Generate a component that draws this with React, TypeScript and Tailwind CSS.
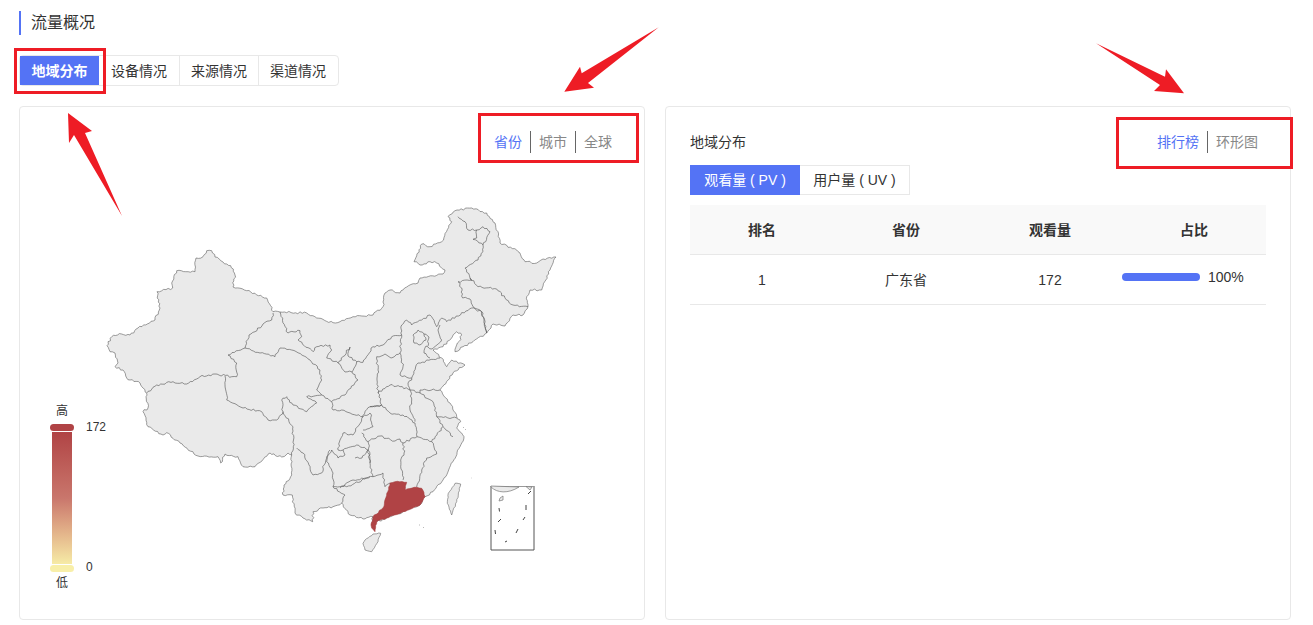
import React from "react";

type P = number[];
function jag(pts: P, closed = false, amp = 1): string {
  let seed = Math.round(pts[0] * 7 + pts[1] * 13) + 11;
  const rnd = () => {
    seed = (seed * 9301 + 49297) % 233280;
    return seed / 233280 - 0.5;
  };
  const n = pts.length / 2;
  let d = `M${pts[0]} ${pts[1]}`;
  const last = closed ? n : n - 1;
  for (let i = 0; i < last; i++) {
    const x0 = pts[i * 2], y0 = pts[i * 2 + 1];
    const j = (i + 1) % n;
    const x1 = pts[j * 2], y1 = pts[j * 2 + 1];
    const len = Math.hypot(x1 - x0, y1 - y0);
    const steps = Math.max(1, Math.round(len / 2.2));
    for (let s = 1; s < steps; s++) {
      const t = s / steps;
      const a = rnd() * 2 * amp;
      d += `L${(x0 + (x1 - x0) * t - ((y1 - y0) / len) * a).toFixed(1)} ${(y0 + (y1 - y0) * t + ((x1 - x0) / len) * a).toFixed(1)}`;
    }
    d += `L${x1} ${y1}`;
  }
  return closed ? d + "Z" : d;
}

const outline: P = [
  206.7,250.7, 211.7,250.7, 215,257, 223,262, 230.7,265.7, 235,275, 233,287, 246.7,290.7, 266.7,298, 273,311.7, 280,312, 306.7,313, 316.7,318, 333,322.7,
  340,321.7, 353,316.7, 373,315, 383,306.7, 385,293, 390,290, 400,293, 406.7,287, 418,283, 420,278, 443,274, 445,270, 436.7,263, 430,261.7, 420,265, 414,261.7, 421.7,244, 430,246.7, 441.7,241.7, 451.7,221.7, 448,216.7, 455,210.7, 471.7,208, 486.7,213, 495,223, 500,243, 516.7,250, 525,261.7, 536.7,263, 543,259, 556,257, 550,270, 541.7,290, 530,290, 526.7,296.7, 528,306.7, 523,315, 513,315, 505,326, 493,324, 486.7,333, 473,341.7, 463,346.7, 455,351.7, 461.7,335, 456.7,331.7, 443,346.7, 433,350, 441.7,358, 446.7,366.7, 451.7,360, 465,365, 453,373, 448,380,
  440,390, 450,403, 456.7,416.7, 460.7,421.7, 456.7,428, 464,436.7, 460,446.7, 453,461.7, 443,480, 433,491.7, 425,496.7, 420,505, 403,511.7, 386.7,518, 376.7,521.7, 371.7,525, 373,516.7, 363,519, 350,515, 341.7,503, 333,506.7, 323,508, 313,511.7, 312.7,521.7, 303,518, 295,513, 292.3,495, 283,495, 284,485, 291.7,475, 291.7,455, 288,453, 281.7,457, 270,453, 255,466.7, 243,466.7, 238,456.7, 225,454, 220.7,463, 218,456.7, 198,456, 180,443, 166.7,432.7, 163,435, 148,426.7, 143,411.7, 148,408, 146,396.7, 146.7,393.3, 140,383, 130,380, 126.7,378, 123,370, 115,366.7, 118,363, 115,353, 110,351.7, 107,345.7, 111.7,336.7, 121.7,334, 130,335, 138,328, 155,320, 160,308, 157,291.7, 172.7,288, 171.7,283, 176.7,270.7, 195,271.7, 196,258, 203,256.7,
];

const borders: P[] = [
  [273,313, 271.7,320, 263,324, 255,331.7, 249,335, 245,348, 228,355, 236.7,363, 236.7,376.7, 231.7,376.7, 215,374, 200,376.7, 186.7,384, 173,381.7, 156.7,385, 146.7,393],
  [225,376, 226.7,400, 243,408, 261.7,411.7, 268,420, 276.7,420, 283,411.7, 293,426.7, 293.3,446.7, 291.7,455],
  [283,411.7, 281.7,400, 286.7,396.7, 293,405, 306.7,411.7, 316.7,403, 306.7,396.7, 321.7,395, 331.7,401.7, 333,410, 341.7,410, 363,416.7, 370,413],
  [245,348, 260,353, 275,356.7, 280,348, 291.7,350, 310,360, 320,370, 321.7,380, 316.7,390, 321.7,395],
  [280,312, 285,326.7, 288,333, 300,330.7, 301.7,336.7, 298,340, 313,351.7, 316.7,346.7, 330,345, 331.7,350, 326.7,358, 338,363, 343,356.7, 350,347, 348,356, 356.7,361.7, 363,362.3, 373,346.7, 383,345, 391.7,336.7, 401.7,335, 401.7,325, 406.7,320, 411.7,325, 421.7,320, 430,315, 436.7,326.7, 441.7,318, 446.7,321.7, 471.7,308, 481.7,311.7, 486.7,333],
  [338,363, 345,372, 352,372, 356.7,361.7],
  [352,372, 358,380, 345,395, 331.7,401.7],
  [376.7,356.7, 378,370, 377,380, 378,393, 381.7,405, 370,406.7, 361.7,416.7],
  [400,353, 403,366.7, 400,375, 411.7,378, 411.7,380, 408,383, 410,390, 400,386.7, 390,385, 378,393],
  [401.7,335, 400,353, 391,358, 385,354, 376.7,356.7],
  [411.7,378, 418,363, 440,358],
  [441.7,340, 438,330, 440,325],
  [441.7,340, 432,349, 426,346, 424,353, 430,358],
  [413,335, 418,330, 424,334, 426,340, 419,345, 414,343, 413,335],
  [424,334, 429,337, 428,346],
  [473,306.7, 483,313, 486.7,333],
  [471.7,280, 458,281.7, 461.7,288, 462.7,298, 470,299, 473,306.7],
  [470,278, 478,286.7, 496.7,289, 505,298, 513,305, 528,306.7],
  [458,216.7, 465,221.7, 468,230, 476.7,230, 483,226.7, 490,231.7, 483,245, 483,251.7, 478,260, 465,268, 470,278, 471.7,280],
  [476.7,230, 476.7,238, 473,239.3, 483,245],
  [370,406.7, 381.7,405, 390,413, 403,415, 415,423, 417,436.7],
  [410,390, 411.7,400, 410,410, 415,421.7],
  [410,390, 420,393, 433,401.7, 436.7,416.7, 443,426.7],
  [420,393, 420,390, 440,390],
  [436.7,416.7, 456.7,418],
  [417,436.7, 431.7,441.7, 436.7,454, 426.7,458, 421.7,470, 416.7,487],
  [431.7,441.7, 443,426.7, 453,436.7],
  [403,443, 417,436.7],
  [403,443, 404,453, 400.7,460, 403,480],
  [368,441.7, 380,436, 395,441, 400,439, 403,443],
  [368,441.7, 370,463, 373,476.7, 383,473, 385,486.7, 390,483],
  [373,476.7, 353,480, 340,488],
  [330,450, 326.7,461.7, 333,473, 333,486.7, 346.7,486.7, 370,476.7],
  [333,486.7, 345,495, 341.7,503],
  [296.7,448, 303,453, 313,475, 321.7,473, 326.7,456.7, 331.7,450, 338,458, 345,455, 343,450, 356.7,445, 368,450, 370,463],
  [340,440, 343,433, 353,435, 363,416.7],
  [340,440, 338,450, 343,450],
  [361.7,433, 368,441.7],
  [363,430, 373,426.7, 370,413],
  [368,450, 362,458, 355,458],
];

const guangdong: P = [371,525, 373,516.7, 383,508, 390,483, 395,481.7, 406.7,482.3, 405,490, 416.7,487.3, 421.7,488.3, 425,496.7, 420,505, 403,511.7, 386.7,518, 376.7,521.7, 375,531.7, 371.7,528];
const hainan: P = [365,540, 373,534, 380.7,533.3, 378,541.7, 371.7,551.7, 365,550, 363,543.3];
const taiwan: P = [455,483.3, 460.7,484, 456.7,501.7, 451.7,515, 447.3,503.3, 448.3,493.3];

function ChinaMap() {
  return (
    <svg className="absolute inset-0 w-full h-full" viewBox="20 107 624 512">
      <path d={jag(outline, true)} fill="#eaeaea" stroke="#5c5c5c" strokeWidth="0.6" strokeLinejoin="round" />
      {borders.map((b, i) => (
        <path key={i} d={jag(b)} fill="none" stroke="#4f4f4f" strokeWidth="0.6" strokeLinejoin="round" />
      ))}
      <path d={jag(guangdong, true, 0.6)} fill="#b04345" stroke="#a23c3e" strokeWidth="0.6" />
      <path d={jag(hainan, true, 0.5)} fill="#eaeaea" stroke="#666" strokeWidth="0.6" />
      <path d={jag(taiwan, true, 0.5)} fill="#eaeaea" stroke="#666" strokeWidth="0.6" />
      <g fill="none" stroke="#555" strokeWidth="0.7">
        <path d="M463 427l1 1M466 429l-1 1M419 525l1 0M423 527l1 1M471 478l.5 0" stroke="#999" />
        <path d="M491 486V550H534V486" stroke="#555" strokeWidth="1" />
        <path d="M491 486.500H534" stroke="#999" strokeWidth="1" />
        <path d="M491 487C497 493 508 494 519 487L491 486Z" fill="#eaeaea" stroke="#777" />
        <path d="M526 486.500L530 490L532 487Z" fill="#eaeaea" stroke="#777" />
        <path d="M500 498L503 496L503 500L499 501Z" fill="#eaeaea" stroke="#777" />
        <path d="M499 508L499.500 511.500M531 491L528 494M526 505V510M525 517L523 520M501 519L498 522M495 530L495.500 534M518 529L516 533M507 541L505 542" strokeWidth="1" stroke="#444" />
      </g>
    </svg>
  );
}

function Legend() {
  return (
    <div className="absolute left-[30px] top-[296px] w-[60px] text-xs text-[#333] leading-4">
      <div className="w-6 text-center h-4">高</div>
      <div className="mt-[5px] h-[7px] w-6 rounded-full bg-[#b04345]" />
      <div className="ml-[2px] mt-px h-[132px] w-5 bg-gradient-to-b from-[#b04345] via-[#c9766c] to-[#f6eba6]" />
      <div className="mt-px h-[7px] w-6 rounded-full bg-[#f8efa9]" />
      <div className="mt-[3px] w-6 text-center h-4">低</div>
      <div className="absolute left-9 top-[16px]">172</div>
      <div className="absolute left-9 top-[156px]">0</div>
    </div>
  );
}

function Switch({ items }: { items: string[] }) {
  return (
    <div className="flex justify-end text-sm leading-[22px] text-[#888]">
      {items.map((t, i) => (
        <div key={t} className={i === 0 ? "px-2 text-[#5473f5]" : "px-2 border-l border-[#666]"}>
          {t}
        </div>
      ))}
    </div>
  );
}

export default function App() {
  const tabs = ["设备情况", "来源情况", "渠道情况"];
  return (
    <div
      className="relative h-[625px] w-[1313px] overflow-hidden bg-white text-[#333]"
      style={{ fontFamily: '"Liberation Sans","Noto Sans CJK SC",sans-serif' }}
    >
      <div className="ml-[19px] mt-[11px] h-6 border-l-2 border-[#5473f5] pl-[10px] flex items-center text-base leading-6">
        流量概况
      </div>
      <div className="ml-[19px] mt-5 flex h-[31px] w-[320px] border border-[#e8e8e8] rounded-sm text-sm">
        <div className="w-[79px] bg-[#5473f5] font-bold text-white flex items-center justify-center">地域分布</div>
        <div className="flex">
          {tabs.map((t, i) => (
            <div key={t} className={i === 0 ? "w-[80px] flex items-center justify-center" : "w-[79px] border-l border-[#e8e8e8] flex items-center justify-center"}>
              {t}
            </div>
          ))}
        </div>
      </div>
      <div className="ml-[19px] mt-5 grid h-[514px] w-[1272px] grid-cols-2 gap-5">
        <div className="relative rounded border border-[#e8e8e8] px-6 pt-6">
          <ChinaMap />
          <Legend />
          <div className="relative">
            <Switch items={["省份", "城市", "全球"]} />
          </div>
        </div>
        <div className="rounded border border-[#e8e8e8] px-6 pt-6">
          <div className="flex items-center justify-between h-[22px] text-sm">
            <span>地域分布</span>
            <Switch items={["排行榜", "环形图"]} />
          </div>
          <div className="mt-[12px] flex h-[30px] text-sm">
            <div className="w-[110px] bg-[#5473f5] text-white flex items-center justify-center">观看量 ( PV )</div>
            <div className="w-[110px] border border-l-0 border-[#e8e8e8] flex items-center justify-center">用户量 ( UV )</div>
          </div>
          <div className="mt-[10px] text-sm">
            <div className="grid grid-cols-4 h-[50px] bg-[#f9f9f9] border-b border-[#e8e8e8] font-bold text-center items-center">
              <div>排名</div>
              <div>省份</div>
              <div>观看量</div>
              <div>占比</div>
            </div>
            <div className="grid grid-cols-4 h-[50px] border-b border-[#e8e8e8] text-center items-center">
              <div>1</div>
              <div>广东省</div>
              <div>172</div>
              <div className="flex items-center gap-2 -translate-y-[3px]">
                <div className="h-2 w-[78px] rounded-full bg-[#5473f5]" />
                <span>100%</span>
              </div>
            </div>
          </div>
        </div>
      </div>

      <svg className="absolute inset-0 pointer-events-none" width="1313" height="625" viewBox="0 0 1313 625">
        <polygon points="68,113 92,131 85,133 122,216 74,135 69,143" fill="#ee1c25" />
        <polygon points="564.300,91.700 580,66.700 581.700,73.300 658.700,27.300 588,83 594,87.700" fill="#ee1c25" />
        <polygon points="1184,93.300 1166,69.300 1165,76.700 1096,43.300 1160,85 1154,91" fill="#ee1c25" />
      </svg>
      <div className="absolute left-[14px] top-[48px] h-[46px] w-[92px] border-[3px] border-[#ee1c25]" />
      <div className="absolute left-[478px] top-[113px] h-[50px] w-[161px] border-[3px] border-[#ee1c25]" />
      <div className="absolute left-[1116px] top-[117px] h-[52px] w-[177px] border-[3px] border-[#ee1c25]" />
    </div>
  );
}
